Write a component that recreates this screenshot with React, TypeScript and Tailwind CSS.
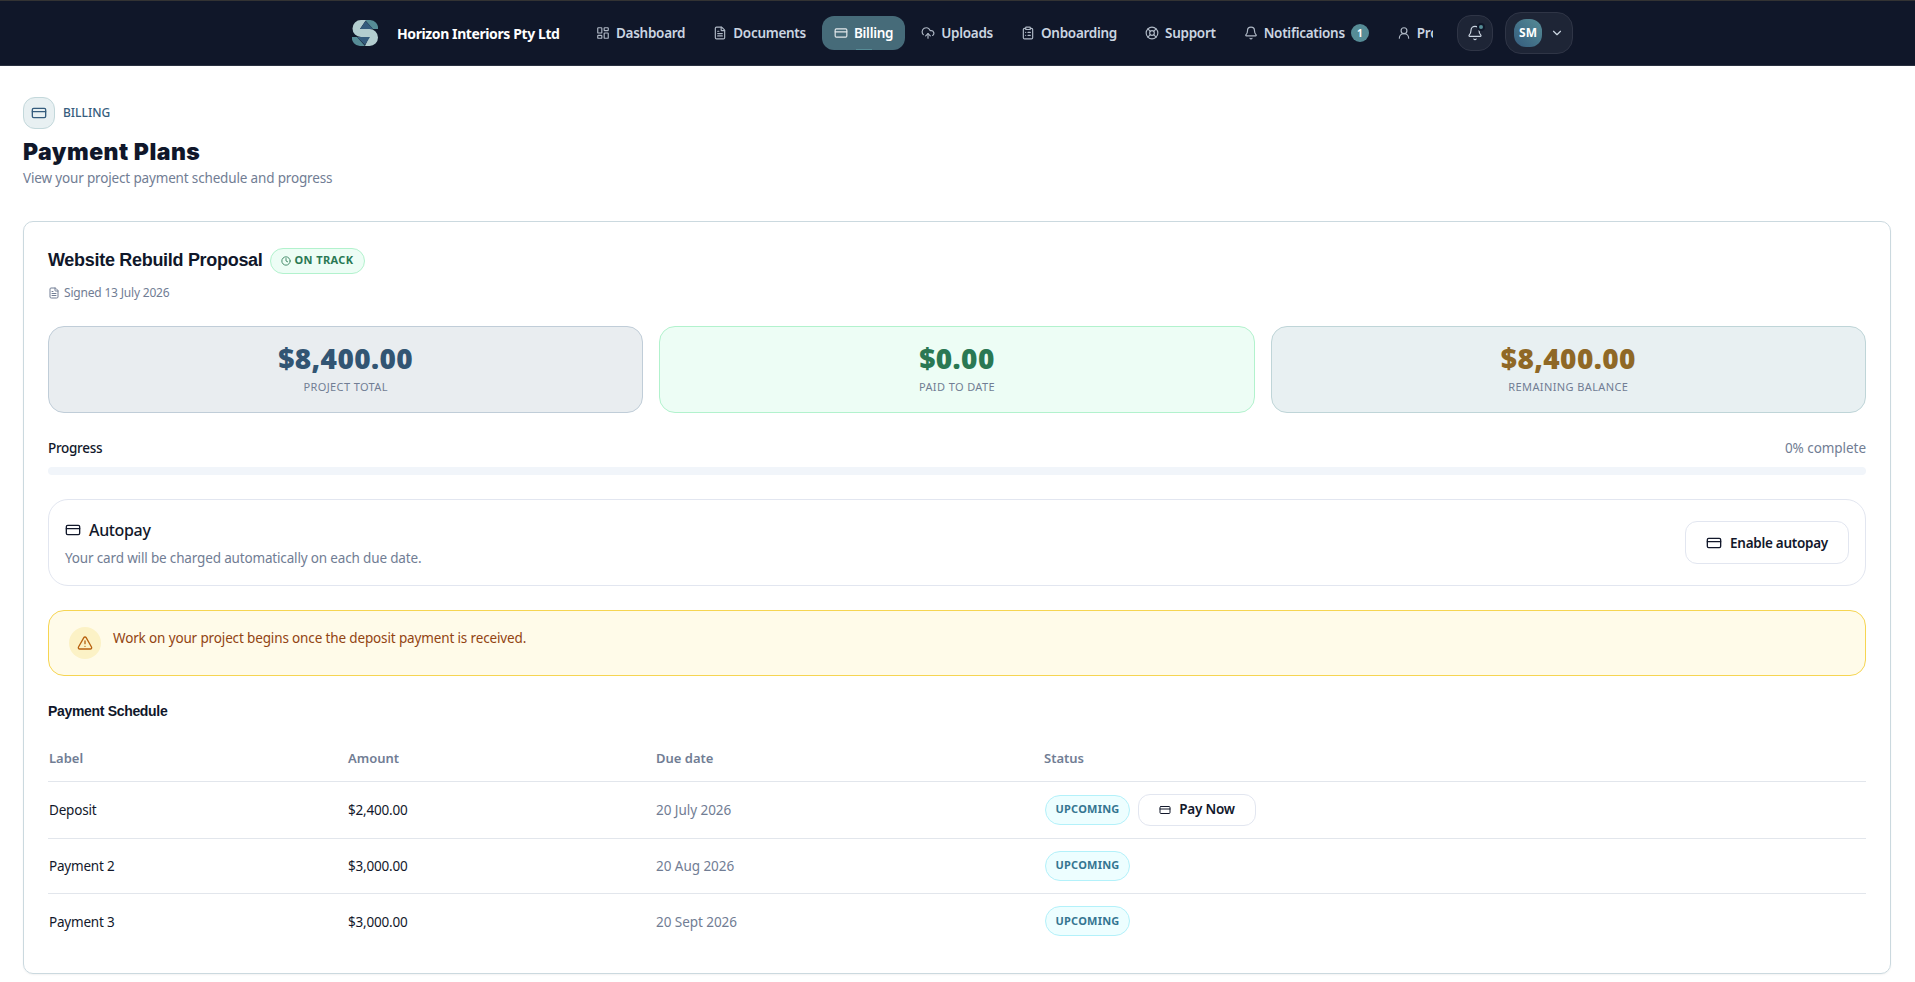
import type { ReactNode } from "react";
import {
  Bell,
  ChevronDown,
  ClipboardList,
  Clock,
  CloudUpload,
  CreditCard,
  FileText,
  LayoutDashboard,
  LifeBuoy,
  TriangleAlert,
  UserRound,
} from "lucide-react";
import type { LucideIcon } from "lucide-react";

type NavItem = { label: string; icon: LucideIcon; active?: boolean; count?: number };

const navItems: NavItem[] = [
  { label: "Dashboard", icon: LayoutDashboard },
  { label: "Documents", icon: FileText },
  { label: "Billing", icon: CreditCard, active: true },
  { label: "Uploads", icon: CloudUpload },
  { label: "Onboarding", icon: ClipboardList },
  { label: "Support", icon: LifeBuoy },
  { label: "Notifications", icon: Bell, count: 1 },
  { label: "Profile", icon: UserRound },
];

const stats = [
  { label: "Project total", value: "$8,400.00", box: "border-[#c0cdd8] bg-[#e9edf0]", text: "text-[#325573]" },
  { label: "Paid to date", value: "$0.00", box: "border-[#b2f2cd] bg-[#edfdf5]", text: "text-[#2a7853]" },
  { label: "Remaining balance", value: "$8,400.00", box: "border-[#bfd5d8] bg-[#e8f0f2]", text: "text-[#8f6826]" },
];

const payments = [
  { label: "Deposit", amount: "$2,400.00", due: "20 July 2026", payable: true },
  { label: "Payment 2", amount: "$3,000.00", due: "20 Aug 2026", payable: false },
  { label: "Payment 3", amount: "$3,000.00", due: "20 Sept 2026", payable: false },
];

function Logo() {
  return (
    <svg viewBox="0 0 26 26" className="h-[26px] w-[26px] shrink-0">
      <path d="M13 0h5a8 8 0 0 1 8 9h-5z" fill="#568c96" />
      <path d="M0 17h5l8 9H8a8 8 0 0 1-8-9z" fill="#568c96" />
      <path d="M14 0H9a8.500 8.500 0 0 0 0 17h8l-4 9h4.500a8.500 8.500 0 0 0 0-17H8z" fill="#b3cdcf" />
      <path d="M8 9l5.500-8 7.500 8z" fill="#355c7d" />
      <path d="M5 17h13l-5 8z" fill="#355c7d" />
    </svg>
  );
}

function Header() {
  return (
    <header className="flex h-[66px] items-center border-t border-b border-t-[#333333] border-b-[#2a3140] bg-[#101729] pl-[352px]">
      <Logo />
      <span className="ml-[19px] w-[188px] shrink-0 text-[14px] font-bold tracking-[-0.4px] whitespace-nowrap text-white">
        Horizon Interiors Pty Ltd
      </span>
      <nav className="-ml-[12px] flex w-[860px] shrink-0 gap-1 overflow-hidden pl-[11px]">
        {navItems.map(({ label, icon: Icon, active, count }) => (
          <a
            key={label}
            className={`relative flex h-[34px] shrink-0 items-center gap-1.5 rounded-xl px-3 text-[13.5px] font-semibold tracking-[-0.28px] ${
              active ? "bg-[#466b79] text-white" : "text-[#cbd5e1]"
            }`}
          >
            <Icon size={14} strokeWidth={2} className="opacity-85" />
            {label}
            {count && (
              <span className="flex h-[18px] w-[18px] items-center justify-center rounded-full bg-[#568c96] text-[10px] font-bold text-white">
                {count}
              </span>
            )}
            {active && <span className="absolute bottom-0 left-1/2 h-px w-4 -translate-x-1/2 bg-[#568c96]" />}
          </a>
        ))}
      </nav>
      <button className="relative ml-6 flex h-9 w-9 shrink-0 items-center justify-center rounded-[14px] border border-[#2f3546] bg-[#1e2536] text-[#cbd5e1]">
        <Bell size={16} strokeWidth={1.75} />
        <span className="absolute top-[7px] right-[7px] h-2 w-2 rounded-full border-2 border-[#101729] bg-[#568c96]" />
      </button>
      <button className="ml-3 flex h-[42px] w-[68px] shrink-0 items-center rounded-2xl border border-[#2f3546] bg-[#1e2536] pl-2">
        <span className="flex h-7 w-7 items-center justify-center rounded-xl bg-linear-to-tr from-[#355c7d] to-[#568c96] text-[12px] font-bold text-white">
          SM
        </span>
        <ChevronDown size={14} className="ml-2 text-[#cbd5e1]" />
      </button>
    </header>
  );
}

function OutlineButton({ className, children }: { className: string; children: ReactNode }) {
  return (
    <button className={`flex items-center justify-center rounded-xl border border-[#e2e6f0] bg-white font-semibold text-[#12182b] ${className}`}>
      {children}
    </button>
  );
}

function PaymentSchedule() {
  return (
    <table className="mt-[10px] w-full table-fixed border-collapse text-left text-[13.5px] tracking-[-0.2px]">
      <colgroup>
        <col className="w-[299px]" />
        <col className="w-[308px]" />
        <col className="w-[388px]" />
        <col />
      </colgroup>
      <thead>
        <tr className="h-[48px] border-b border-[#e2e6ec] text-[#717d94]">
          {["Label", "Amount", "Due date", "Status"].map((heading) => (
            <th key={heading} className="pt-[3px] pl-px text-[13px] font-semibold tracking-normal">
              {heading}
            </th>
          ))}
        </tr>
      </thead>
      <tbody>
        {payments.map((payment) => (
          <tr
            key={payment.label}
            className={`border-b border-[#e2e6ec] last:border-b-0 ${payment.payable ? "h-[57px]" : "h-[55px]"}`}
          >
            <td className="pt-[2px] pl-px text-[#12182b]">{payment.label}</td>
            <td className="pt-[2px] pl-px text-[#12182b]">{payment.amount}</td>
            <td className="pt-[2px] pl-px tracking-[-0.05px] text-[#717d94]">{payment.due}</td>
            <td className="pl-[2px]">
              <div className="flex items-center gap-2">
                <span className="flex h-[30px] w-[85px] items-center justify-center rounded-full border border-[#b3f1fa] bg-[#edfeff] text-[11px] font-bold tracking-[0.02em] text-[#357591] uppercase">
                  Upcoming
                </span>
                {payment.payable && (
                  <OutlineButton className="h-8 w-[118px] gap-2 text-[13.5px] tracking-[-0.2px]">
                    <CreditCard size={12} />
                    Pay Now
                  </OutlineButton>
                )}
              </div>
            </td>
          </tr>
        ))}
      </tbody>
    </table>
  );
}

export default function App() {
  return (
    <div className="h-[982px] overflow-hidden bg-white font-['Noto_Sans',sans-serif]">
      <Header />
      <main className="pt-[31px] pr-6 pl-[23px]">
        <div className="flex items-center gap-2">
          <span className="flex h-8 w-8 items-center justify-center rounded-xl border border-[#c3d8db] bg-[#e8f0f2] text-[#355c7d]">
            <CreditCard size={16} />
          </span>
          <span className="text-[12px] font-medium text-[#355c7d] uppercase">Billing</span>
        </div>
        <h1 className="mt-[8px] font-['Inter','Liberation_Sans',sans-serif] text-[23px] leading-[30px] font-black tracking-[0.5px] text-[#10172a]">
          Payment Plans
        </h1>
        <p className="text-[13.5px] leading-[22px] tracking-[-0.16px] text-[#717d94]">
          View your project payment schedule and progress
        </p>

        <section className="mt-[32px] h-[753px] rounded-[10px] border border-[#cbd9df] px-6 shadow-xs">
          <div className="flex items-center gap-[7px] pt-[25px]">
            <h2 className="font-['Liberation_Sans',sans-serif] text-[18px] font-bold tracking-[-0.3px] text-[#10172a]">
              Website Rebuild Proposal
            </h2>
            <span className="flex h-[26px] w-[95px] items-center justify-center gap-1 rounded-full border border-[#b2f2cd] bg-[#edfdf5] text-[11px] font-bold tracking-[0.4px] text-[#2a7853]">
              <Clock size={10} />
              ON TRACK
            </span>
          </div>
          <p className="mt-[11px] flex items-center gap-1 text-[12px] leading-4 tracking-[-0.19px] text-[#717d94]">
            <FileText size={12} />
            Signed 13 July 2026
          </p>

          <div className="mt-[25px] grid grid-cols-3 gap-4">
            {stats.map((stat) => (
              <div key={stat.label} className={`flex h-[87px] flex-col items-center rounded-2xl border pt-[14px] ${stat.box}`}>
                <span className={`text-[28px] leading-[34px] font-black tracking-[0.4px] ${stat.text}`}>{stat.value}</span>
                <span className="mt-[4px] text-[11px] leading-4 tracking-[0.035em] text-[#717d94] uppercase">{stat.label}</span>
              </div>
            ))}
          </div>

          <div className="mt-[25px] flex justify-between text-[13.5px] leading-5">
            <span className="font-medium tracking-[-0.3px] text-[#12182b]">Progress</span>
            <span className="tracking-[-0.05px] text-[#717d94]">0% complete</span>
          </div>
          <div className="mt-[9px] h-2 rounded-full bg-[#f1f5fa]" />

          <div className="mt-6 flex h-[87px] items-center justify-between rounded-[20px] border border-[#e2e6f0] px-4">
            <div>
              <h3 className="flex items-center gap-2 text-[16px] leading-6 font-medium tracking-[-0.35px] text-[#12182b]">
                <CreditCard size={16} />
                Autopay
              </h3>
              <p className="mt-[6px] text-[13.5px] leading-5 tracking-[-0.16px] text-[#717d94]">
                Your card will be charged automatically on each due date.
              </p>
            </div>
            <OutlineButton className="h-[43px] w-[164px] gap-2 pt-px text-[13.5px] tracking-[-0.28px]">
              <CreditCard size={16} />
              Enable autopay
            </OutlineButton>
          </div>

          <div className="mt-6 flex h-[66px] rounded-2xl border border-[#f6d552] bg-[#fffbe9] pt-4 pl-5">
            <span className="flex h-8 w-8 items-center justify-center rounded-full bg-[#fcf2c6] text-[#b8620f]">
              <TriangleAlert size={16} />
            </span>
            <p className="ml-3 text-[13.5px] leading-[22px] tracking-[-0.14px] text-[#924412]">
              Work on your project begins once the deposit payment is received.
            </p>
          </div>

          <h3 className="mt-6 font-['Liberation_Sans',sans-serif] text-[14px] leading-[23px] font-bold tracking-[-0.32px] text-[#10172a]">
            Payment Schedule
          </h3>
          <PaymentSchedule />
        </section>
      </main>
    </div>
  );
}
